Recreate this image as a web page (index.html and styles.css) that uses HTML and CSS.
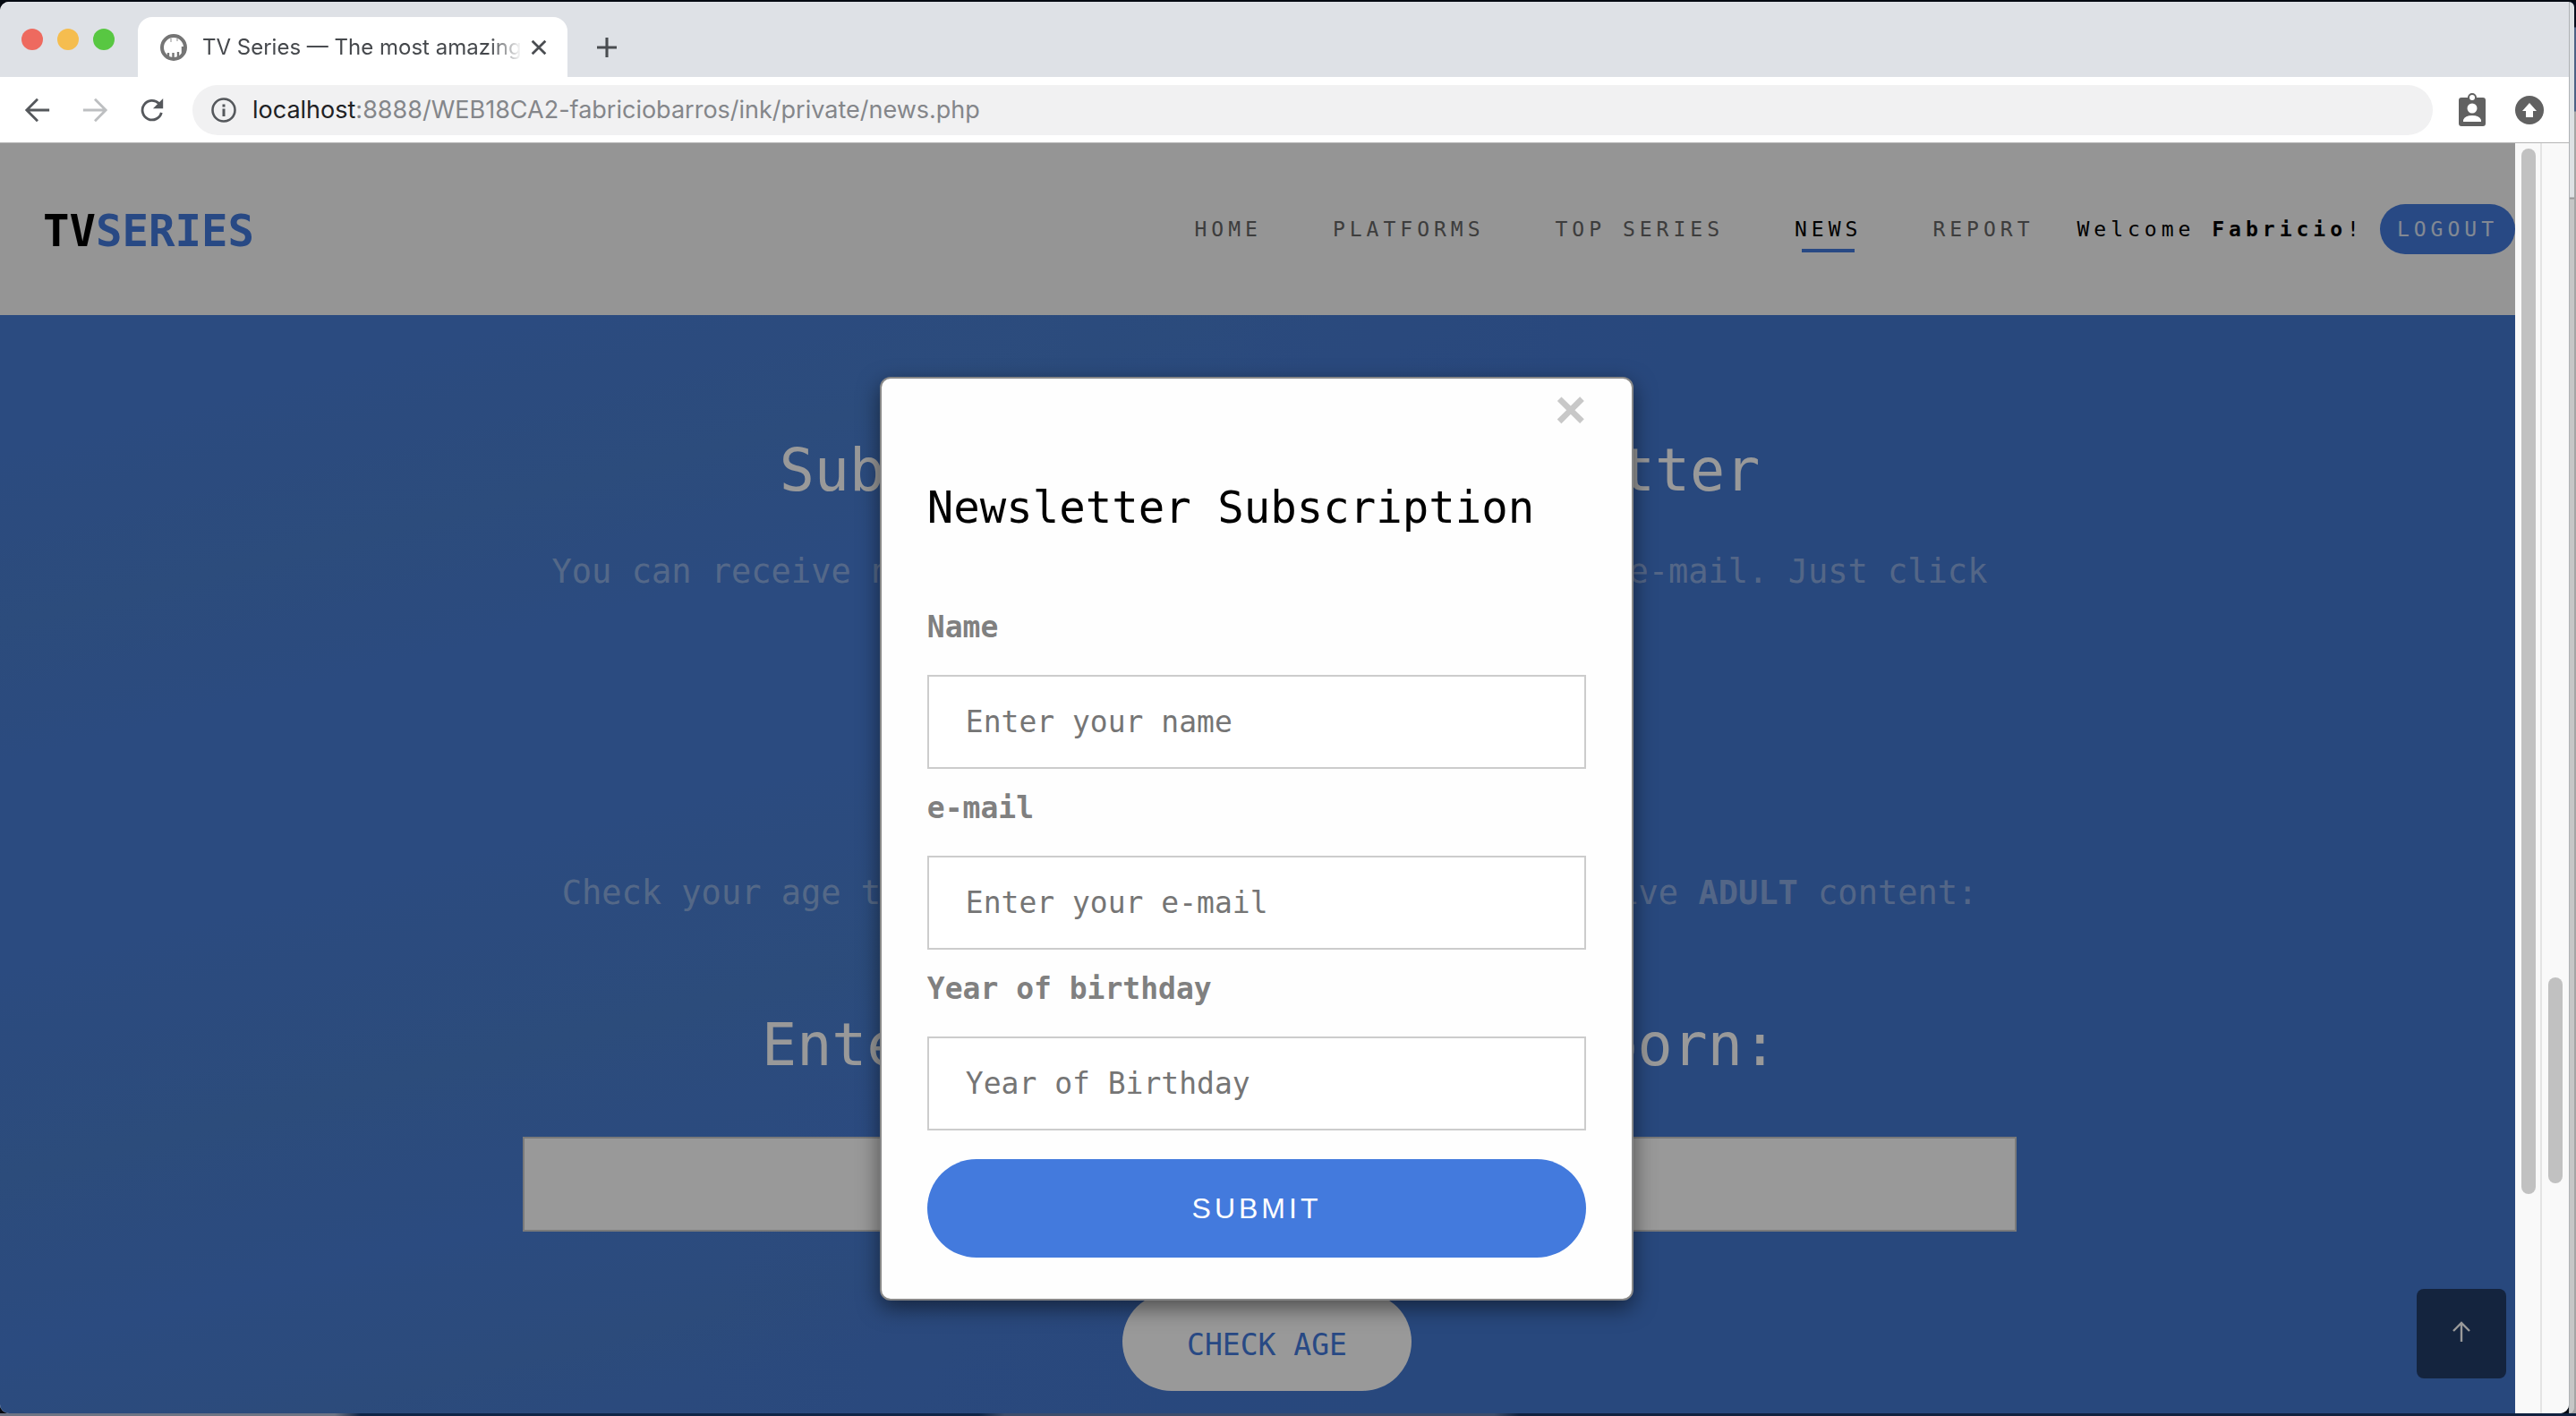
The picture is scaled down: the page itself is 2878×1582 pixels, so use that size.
FILE: index.html
```html
<!DOCTYPE html>
<html lang="en">
<head>
<meta charset="utf-8">
<title>TV Series — The most amazing</title>
<link rel="stylesheet" href="styles.css">
</head>
<body>
<div class="desktop">
  <div class="window">
    <div class="tab-strip">
      <div class="lights"><span class="light red"></span><span class="light yellow"></span><span class="light green"></span></div>
      <div class="tab">
        <svg class="favicon" viewBox="0 0 30 30" aria-hidden="true"><circle cx="15" cy="15" r="13" fill="#fff" stroke="#757575" stroke-width="4"/><path d="M9 28V21M14.500 29V21M20 28V20M25 24V14" stroke="#757575" stroke-width="2.400"/><path d="M12 5V9M19 5V8" stroke="#b5b5b5" stroke-width="1.500"/></svg>
        <span class="tab-title">TV Series — The most amazing</span>
        <button class="icon-button" aria-label="Close tab"><svg class="tab-icon" viewBox="0 0 24 24"><path d="M4 4L20 20M20 4L4 20" stroke="#4a4d51" stroke-width="3"/></svg></button>
      </div>
      <button class="icon-button new-tab" aria-label="New tab"><svg class="tab-icon" viewBox="0 0 24 24"><path d="M12 0V24M0 12H24" stroke="#4a4d51" stroke-width="3.4"/></svg></button>
    </div>
    <div class="toolbar">
      <button class="icon-button" aria-label="Back"><svg class="tool-icon" viewBox="0 0 32 32"><path d="M30 16H4M16 3L3 16L16 29" fill="none" stroke="#55585c" stroke-width="3"/></svg></button>
      <button class="icon-button" aria-label="Forward"><svg class="tool-icon" viewBox="0 0 32 32"><path d="M2 16H28M16 3L29 16L16 29" fill="none" stroke="#bdbfc1" stroke-width="3"/></svg></button>
      <button class="icon-button" aria-label="Reload"><svg class="tool-icon" viewBox="0 0 32 32"><path d="M27 19A11.5 11.5 0 1 1 24 8" fill="none" stroke="#55585c" stroke-width="3"/><path d="M29 2V14H17Z" fill="#55585c"/></svg></button>
      <div class="address">
        <svg class="info" viewBox="0 0 28 28" aria-hidden="true"><circle cx="14" cy="14" r="12.5" fill="none" stroke="#55585c" stroke-width="2.6"/><path d="M14 12.500V21M14 7.500V10.500" stroke="#55585c" stroke-width="3"/></svg>
        <span class="url"><span class="host">localhost</span>:8888/WEB18CA2-fabriciobarros/ink/private/news.php</span>
      </div>
      <svg class="badge" viewBox="0 0 30 38" aria-hidden="true"><path d="M3 5H10A5 5 0 0 1 20 5H27Q30 5 30 8V34Q30 37 27 37H3Q0 37 0 34V8Q0 5 3 5Z" fill="#616161"/><circle cx="15" cy="5" r="3" fill="#fff"/><circle cx="15" cy="17" r="5.500" fill="#fff"/><path d="M5 32V30Q7 25 15 25Q23 25 25 30V32Z" fill="#fff"/></svg>
      <svg class="update" viewBox="0 0 32 32" aria-hidden="true"><circle cx="16" cy="16" r="16" fill="#616161"/><path d="M16 8L24 17H20V24H12V17H8Z" fill="#fff"/></svg>
    </div>
    <div class="viewport">
      <div class="page">
        <header class="site-header">
          <a class="logo" href="#">TV<span class="logo-accent">SERIES</span></a>
          <nav class="nav">
            <a class="nav-link" href="#">HOME</a>
            <a class="nav-link" href="#">PLATFORMS</a>
            <a class="nav-link" href="#">TOP SERIES</a>
            <a class="nav-link active" href="#">NEWS</a>
            <a class="nav-link" href="#">REPORT</a>
          </nav>
          <span class="welcome">Welcome <b>Fabricio</b>!</span>
          <button class="logout">LOGOUT</button>
        </header>
        <main class="news">
          <h1 class="headline">Subscribe for our Newsletter</h1>
          <p class="lead">You can receive news about your favorite tv series by e-mail. Just click</p>
          <p class="lead check">Check your age to find out if you are allowed to receive <b>ADULT</b> content:</p>
          <h2 class="headline question"><label for="born">Enter the year you were born:</label></h2>
          <input class="age-input" id="born" type="text">
          <button class="age-button">CHECK AGE</button>
        </main>
        <button class="to-top" aria-label="Back to top"><svg class="arrow" viewBox="0 0 24 24"><path d="M12 23V2M3 11L12 2L21 11" fill="none" stroke="#fff" stroke-width="2.400"/></svg></button>
        <div class="overlay">
          <form class="modal">
            <button class="close" type="button" aria-label="Close">×</button>
            <h2 class="modal-title">Newsletter Subscription</h2>
            <label class="label" for="name">Name</label>
            <input class="field" id="name" type="text" placeholder="Enter your name">
            <label class="label" for="email">e-mail</label>
            <input class="field" id="email" type="email" placeholder="Enter your e-mail">
            <label class="label" for="year">Year of birthday</label>
            <input class="field" id="year" type="text" placeholder="Year of Birthday">
            <button class="submit" type="button">SUBMIT</button>
          </form>
        </div>
      </div>
      <div class="scroll inner"><span class="thumb"></span></div>
      <div class="scroll outer"><span class="thumb"></span></div>
    </div>
  </div>
  <div class="behind"><div class="behind-window"></div></div>
</div>
</body>
</html>
```
FILE: styles.css
```css
* { box-sizing: border-box; }

body {
  margin: 0;
  font-family: "DejaVu Sans Mono", "Liberation Mono", monospace;
}

button, input { font: inherit; }
button { border: 0; padding: 0; cursor: pointer; }
a { text-decoration: none; }

/* desktop behind the browser */
.desktop {
  display: flex;
  min-height: 100vh;
  padding: 2px 0 3px;
  background: linear-gradient(90deg, #6d7484 0 13%, #0f2547 14% 38%, #3c4d6b 39% 58%, #10213f 59%) bottom / 100% 3px no-repeat, #050a12;
}

.window {
  flex: 1;
  display: flex;
  flex-direction: column;
  min-width: 0;
  border-radius: 10px 0 10px 10px;
  overflow: hidden;
  background: #fff;
}

.behind {
  width: 8px;
  padding-right: 2px;
  background: linear-gradient(#060c1c 0 28px, #4d6184 29px 122px, #a5a5a5 123px);
}

.behind-window {
  height: 100%;
  border-left: 1px solid #b0b3b6;
  border-radius: 0 10px 10px 0;
  background: linear-gradient(#dde1e4 0 218px, #999 219px 220px, #c6c6c6 221px);
}

/* tab strip */
.tab-strip {
  display: flex;
  align-items: flex-end;
  height: 84px;
  background: #dee1e6;
}

.lights {
  display: flex;
  gap: 16px;
  width: 154px;
  padding-left: 24px;
  align-self: center;
}

.light {
  width: 24px;
  height: 24px;
  border-radius: 50%;
}

.red { background: #ee6a5f; }
.yellow { background: #f5bd4f; }
.green { background: #58c742; }

.tab {
  display: flex;
  align-items: center;
  gap: 17px;
  width: 480px;
  height: 67px;
  padding: 0 20px 0 25px;
  border-radius: 16px 16px 0 0;
  background: #fff;
}

.favicon { width: 30px; height: 30px; flex: none; }

.tab-title {
  flex: 1;
  overflow: hidden;
  white-space: nowrap;
  font: 24px/32px Inter, sans-serif;
  color: #45484c;
  mask-image: linear-gradient(90deg, #000 90%, transparent);
}

.icon-button {
  display: flex;
  align-items: center;
  justify-content: center;
  width: 24px;
  background: none;
}

.tab .icon-button { margin-left: -10px; }
.tab-icon { width: 22px; height: 22px; }
.new-tab { height: 67px; margin-left: 32px; }

/* toolbar */
.toolbar {
  display: flex;
  align-items: center;
  height: 74px;
  padding: 0 28px 0 26px;
  border-bottom: 1px solid #b5b5b5;
}

.toolbar .icon-button { width: 32px; margin-right: 32px; }
.tool-icon { width: 30px; height: 30px; }

.address {
  flex: 1;
  display: flex;
  align-items: center;
  gap: 18px;
  height: 56px;
  margin: 0 29px 0 -3px;
  padding-left: 21px;
  border-radius: 28px;
  background: #f1f1f2;
}

.info { width: 28px; height: 28px; }
.url { font: 27px/40px Inter, sans-serif; color: #84868a; }
.host { color: #202124; }
.badge { width: 30px; height: 38px; margin-right: 33px; }
.update { width: 32px; height: 32px; }

/* page and its scrollbars */
.viewport { flex: 1; display: flex; }

.page {
  position: relative;
  flex: 1;
  display: flex;
  flex-direction: column;
}

.scroll {
  width: 30px;
  padding: 6px 7px;
  background: #f9f9f9;
}

.inner { border-right: 2px solid #e4e4e4; }

.thumb {
  display: block;
  width: 16px;
  height: 83%;
  border-radius: 8px;
  background: #c1c1c1;
}

.outer {
  display: flex;
  flex-direction: column;
  justify-content: flex-end;
  padding-bottom: 257px;
}

.outer .thumb { height: 230px; }

/* site header */
.site-header {
  display: flex;
  align-items: center;
  height: 192px;
  padding-left: 48px;
  background: #f8f8f8;
  font-size: 23px;
  letter-spacing: 5px;
}

.logo {
  margin-right: auto;
  padding-top: 4px;
  font-size: 49px;
  font-weight: bold;
  letter-spacing: 0;
  color: #000;
}

.logo-accent { color: #437add; }

.nav { display: flex; gap: 79px; margin-right: 48px; }

.nav-link { position: relative; color: #666; }
.nav-link.active { color: #000; }

.active::after {
  content: "";
  position: absolute;
  left: 8px;
  right: 8px;
  bottom: -13px;
  height: 4px;
  background: #437add;
}

.welcome { color: #000; }

.logout {
  height: 56px;
  margin-left: 18px;
  padding: 0 19px;
  border-radius: 28px;
  background: #437add;
  color: #dbe4f5;
  letter-spacing: 5px;
}

/* news section */
.news {
  flex: 1;
  display: flex;
  flex-direction: column;
  align-items: center;
  padding: 134px 0 23px 27px;
  background:
    linear-gradient(105deg, transparent 35%, #4478d0 60%),
    linear-gradient(166deg, #497dd5 8%, #4a7fcf 18%, #497dd5 26%, #497dd5 38%, #4a7fce 50%, #497dd5 60%, #4a7dce 68%, #477bd2 76%, #4478d0);
}

.headline {
  margin: 0;
  font-size: 65px;
  line-height: 80px;
  font-weight: normal;
  color: #fff;
}

.lead {
  margin: 43px 0 0;
  font-size: 37px;
  line-height: 60px;
  white-space: nowrap;
  color: rgba(255, 255, 255, 0.4);
}

.check { margin-top: 299px; }
.question { margin-top: 100px; }

.age-input {
  width: 60%;
  height: 106px;
  margin-top: 62px;
  padding: 0 40px;
  border: 2px solid #ccc;
  background: #fff;
  font-size: 33px;
}

.age-button {
  height: 110px;
  margin: 68px 6px 0 0;
  padding: 6px 72px 0;
  border-radius: 55px;
  background: #fff;
  color: #437add;
  font-size: 33px;
}

.to-top {
  position: absolute;
  right: 10px;
  bottom: 39px;
  width: 100px;
  height: 100px;
  border-radius: 8px;
  background: rgba(0, 0, 0, 0.5);
}

.arrow { width: 24px; height: 24px; }

/* subscription dialog */
.overlay {
  position: absolute;
  inset: 0;
  padding: 261px 2px 0 0;
  background: rgba(0, 0, 0, 0.4);
}

.modal {
  display: flex;
  flex-direction: column;
  width: 30%;
  margin: 0 auto;
  padding: 0 51px 46px;
  border: 2px solid #888;
  border-radius: 12px;
  background: #fefefe;
  box-shadow: 0 8px 24px rgba(0, 0, 0, 0.5);
}

.close {
  align-self: flex-end;
  background: none;
  color: #c8c8c8;
  font: bold 60px/70px "Liberation Sans", Arial, sans-serif;
}

.modal-title {
  margin: 40px 0 68px;
  font-size: 49px;
  line-height: 70px;
  font-weight: normal;
  color: #000;
}

.label {
  font-size: 33px;
  line-height: 60px;
  font-weight: bold;
  color: #808080;
}

.field {
  width: 100%;
  height: 105px;
  margin: 23px 0 14px;
  padding: 0 41px;
  border: 2px solid #ccc;
  border-radius: 0;
  background: #fff;
  font-size: 33px;
}

.field::placeholder { color: #757575; }

.submit {
  height: 110px;
  margin-top: 18px;
  border-radius: 55px;
  background: #437add;
  color: #fff;
  font: 32px/40px "Liberation Sans", Arial, sans-serif;
  letter-spacing: 4px;
}
```
